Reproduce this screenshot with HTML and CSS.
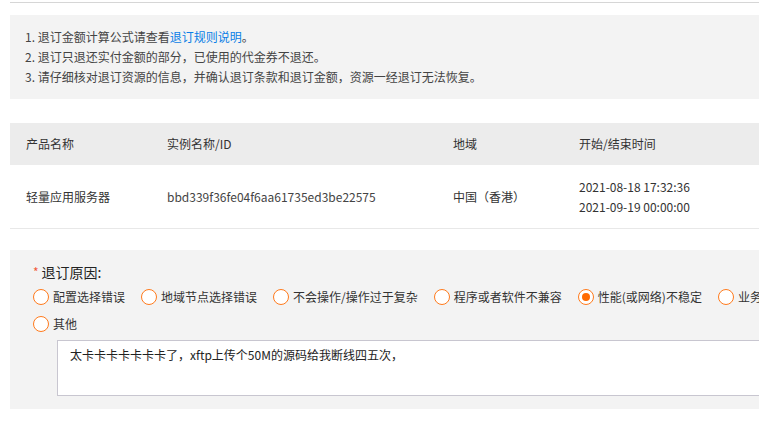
FILE: index.html
```html
<!DOCTYPE html>
<html lang="zh-CN">
<head>
<meta charset="utf-8">
<title>退订</title>
<link rel="stylesheet" href="styles.css">
</head>
<body>
<div class="page">
  <div class="topline"></div>

  <div class="notice">
    <p>1. 退订金额计算公式请查看<a class="link" href="#">退订规则说明</a>。</p>
    <p>2. 退订只退还实付金额的部分，已使用的代金券不退还。</p>
    <p>3. 请仔细核对退订资源的信息，并确认退订条款和退订金额，资源一经退订无法恢复。</p>
  </div>

  <div class="table">
    <div class="row head">
      <div class="cell">产品名称</div>
      <div class="cell">实例名称/ID</div>
      <div class="cell">地域</div>
      <div class="cell">开始/结束时间</div>
    </div>
    <div class="row body">
      <div class="cell">轻量应用服务器</div>
      <div class="cell id">bbd339f36fe04f6aa61735ed3be22575</div>
      <div class="cell">中国（香港）</div>
      <div class="cell dates"><span>2021-08-18 17:32:36</span><span>2021-09-19 00:00:00</span></div>
    </div>
  </div>

  <div class="reason">
    <div class="title"><span class="star">*</span>退订原因:</div>
    <div class="options">
      <label class="opt"><span class="radio"></span>配置选择错误</label>
      <label class="opt"><span class="radio"></span>地域节点选择错误</label>
      <label class="opt"><span class="radio"></span>不会操作/操作过于复杂</label>
      <label class="opt"><span class="radio"></span>程序或者软件不兼容</label>
      <label class="opt"><span class="radio checked"></span>性能(或网络)不稳定</label>
      <label class="opt"><span class="radio"></span>业务调整</label>
    </div>
    <div class="options">
      <label class="opt"><span class="radio"></span>其他</label>
    </div>
    <div class="textarea">太卡卡卡卡卡卡卡了，xftp上传个50M的源码给我断线四五次，</div>
  </div>
</div>
</body>
</html>
```

FILE: styles.css
```css
html, body {
  margin: 0;
  padding: 0;
  background: #fff;
  overflow: hidden;
}
body {
  font-family: "Microsoft YaHei", "Noto Sans CJK SC", "Noto Sans", sans-serif;
  font-size: 12px;
  color: #333;
}
.page {
  width: 1100px;
  padding: 2px 0 0 10px;
}
.topline {
  border-top: 1px solid #d6d6d6;
}
.notice {
  margin-top: 12px;
  background: #f3f3f3;
  padding: 12px 15px;
  color: #444;
}
.notice p {
  margin: 0;
  line-height: 20px;
  height: 20px;
}
.link {
  color: #0a7ee6;
  text-decoration: none;
}
.table {
  margin-top: 24px;
}
.row {
  display: grid;
  grid-template-columns: 141px 286px 126px 1fr;
  align-items: center;
}
.row.head {
  height: 42px;
  background: #ececec;
}
.row.body {
  height: 63px;
  border-bottom: 1px solid #e8e8e8;
}
.cell {
  padding-left: 16px;
  line-height: 20px;
}
.cell.id {
  color: #444;
}
.dates {
  display: flex;
  flex-direction: column;
}
.reason {
  margin-top: 21px;
  background: #f3f3f3;
  padding: 12px 0 13px 23px;
}
.title {
  font-size: 14px;
  line-height: 20px;
  color: #222;
  display: flex;
  align-items: center;
}
.star {
  color: #f2593a;
  font-size: 12px;
  margin-right: 3px;
}
.options {
  display: flex;
  margin-top: 5px;
  height: 20px;
  align-items: center;
}
.options + .options {
  margin-top: 7px;
}
.opt {
  display: flex;
  align-items: center;
  gap: 4px;
  margin-right: 16px;
  line-height: 20px;
  color: #333;
  white-space: nowrap;
}
.radio {
  width: 14px;
  height: 14px;
  border: 1px solid #ff7a1c;
  border-radius: 50%;
  background: #fff;
  display: flex;
  align-items: center;
  justify-content: center;
  flex: none;
}
.radio.checked::after {
  content: "";
  width: 8px;
  height: 8px;
  border-radius: 50%;
  background: #ff6a00;
}
.textarea {
  margin: 6px 0 0 24px;
  height: 46px;
  border: 1px solid #c8c6d0;
  background: #fff;
  padding: 4px 12px;
  line-height: 20px;
  color: #222;
}
```
